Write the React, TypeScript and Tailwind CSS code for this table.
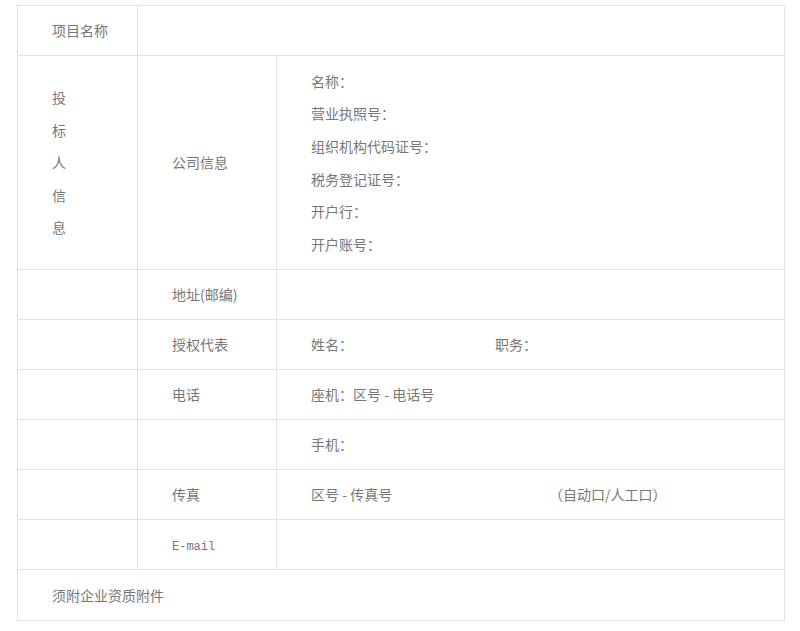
import React from "react";

const CELL = "border border-[#e3e3e3] align-middle pl-[34px]";
const FONT = { fontFamily: '"Noto Sans CJK SC", "Noto Sans", sans-serif' };

interface RowProps {
  label: React.ReactNode;
  children?: React.ReactNode;
}

function Row({ label, children }: RowProps) {
  return (
    <tr className="h-[50px]">
      <td className={CELL}></td>
      <td className={CELL}>{label}</td>
      <td className={CELL}>{children}</td>
    </tr>
  );
}

export default function App() {
  const companyLines = [
    "名称：",
    "营业执照号：",
    "组织机构代码证号：",
    "税务登记证号：",
    "开户行：",
    "开户账号：",
  ];

  return (
    <div className="bg-white min-h-[631px] pl-[17px] pt-[5px] pr-[16px]" style={FONT}>
      <table className="w-[768px] border-collapse table-fixed text-[14px] text-[#777]">
        <colgroup>
          <col className="w-[120px]" />
          <col className="w-[139px]" />
          <col />
        </colgroup>
        <tbody>
          <tr className="h-[50px]">
            <td className={CELL}>项目名称</td>
            <td className={CELL} colSpan={2}></td>
          </tr>

          {/* company info */}
          <tr className="h-[214px]">
            <td className={CELL}>
              <div className="flex flex-col leading-[32.5px]">
                {"投标人信息".split("").map((c) => (
                  <span key={c}>{c}</span>
                ))}
              </div>
            </td>
            <td className={CELL}>公司信息</td>
            <td className={CELL}>
              <div className="flex flex-col leading-[32.6px]">
                {companyLines.map((l) => (
                  <span key={l}>{l}</span>
                ))}
              </div>
            </td>
          </tr>

          <Row label="地址(邮编)" />
          <Row label="授权代表">
            <div className="flex">
              <span className="w-[184px]">姓名：</span>
              <span>职务：</span>
            </div>
          </Row>
          <Row label="电话">座机：区号 - 电话号</Row>
          <Row label="">手机：</Row>
          <Row label="传真">
            <div className="flex">
              <span className="w-[238px]">区号 - 传真号</span>
              <span>（自动口/人工口）</span>
            </div>
          </Row>
          <Row
            label={
              <span style={{ fontFamily: '"Liberation Mono", "DejaVu Sans Mono", monospace' }} className="text-[12px]">
                E-mail
              </span>
            }
          />
          <tr className="h-[51px]">
            <td className={CELL} colSpan={3}>须附企业资质附件</td>
          </tr>
        </tbody>
      </table>
    </div>
  );
}
